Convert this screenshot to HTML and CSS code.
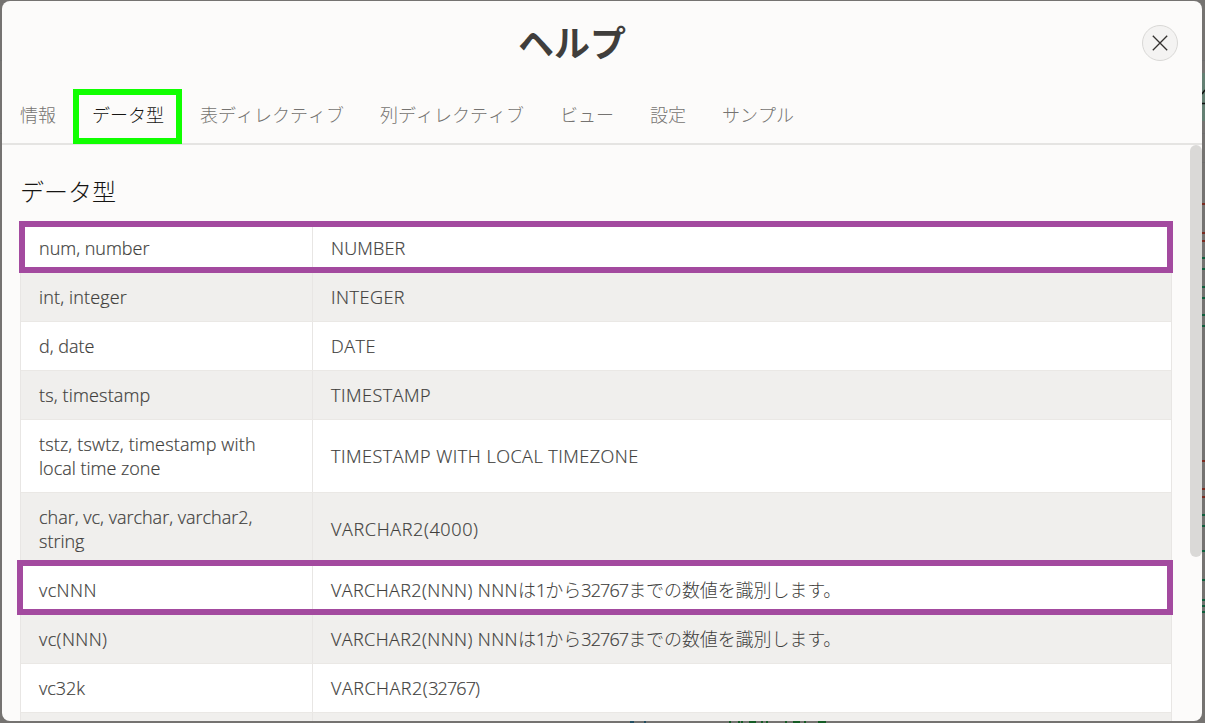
FILE: index.html
```html
<!DOCTYPE html>
<html lang="ja">
<head>
<meta charset="utf-8">
<title>ヘルプ</title>
<link rel="stylesheet" href="styles.css">
</head>
<body>
<div class="backdrop" aria-hidden="true">
  <svg width="1205" height="723" viewBox="0 0 1205 723">
    <path fill="#648073" d="M1202 73h3v48h-3z"/>
    <path stroke="#6e6e6e" d="M1202 60.500h3M1202 133.500h3M0 133.500h2M1202 162.500h3M0 60.500h2"/>
    <path stroke="#111" stroke-width="1.500" d="M1202 94l3-4M1202 103.500h3"/>
    <path stroke="#7a2b20" stroke-width="2" d="M1202 204h3M1202 233h3M1202 241h3M1202 461h3M1202 489h3M1202 497h3"/>
    <path stroke="#105f3c" stroke-width="2" d="M1202 258h3M1202 269h3M1202 287h3M1202 298h3M1202 315h3M1202 326h3M1202 515h3M1202 526h3M1202 551h3M1202 580h3M1202 600h3M1202 606h3M1202 612h3"/>
    <path stroke="#244f62" stroke-width="2" d="M630 722h4M644 722h2"/>
    <path stroke="#155c25" stroke-width="2" d="M729 722h2M738 722h2M741 722h2M749 722h7M761 722h2M766 722h2M785 722h2M793 722h7M804 722h2M818 722h8"/>
  </svg>
</div>
<main class="dialog">
  <header class="dialog-header">
    <h1 class="dialog-title">ヘルプ</h1>
    <button class="close" aria-label="閉じる"><svg width="16" height="16" viewBox="0 0 16 16"><path d="M.8.8l14.400 14.400M15.200.8L.8 15.200"/></svg></button>
  </header>
  <nav class="tabs">
    <span class="tab">情報</span>
    <span class="tab active">データ型</span>
    <span class="tab">表ディレクティブ</span>
    <span class="tab">列ディレクティブ</span>
    <span class="tab">ビュー</span>
    <span class="tab">設定</span>
    <span class="tab">サンプル</span>
  </nav>
  <section class="content">
    <h2 class="section-title">データ型</h2>
    <div class="table">
      <div class="row marked first"><div class="cell">num, number</div><div class="cell loose">NUMBER</div></div>
      <div class="row"><div class="cell loose">int, integer</div><div class="cell caps">INTEGER</div></div>
      <div class="row"><div class="cell">d, date</div><div class="cell caps">DATE</div></div>
      <div class="row"><div class="cell loose">ts, timestamp</div><div class="cell caps">TIMESTAMP</div></div>
      <div class="row"><div class="cell"><span><span class="loose">tstz, tswtz, timestamp with</span><br>local time zone</span></div><div class="cell caps">TIMESTAMP WITH LOCAL TIMEZONE</div></div>
      <div class="row"><div class="cell">char, vc, varchar, varchar2,<br>string</div><div class="cell wide">VARCHAR2(4000)</div></div>
      <div class="row marked second"><div class="cell type">vcNNN</div><div class="cell"><span><span class="type">VARCHAR2(NNN) NNN</span><span class="ja">は</span><span class="digits">1</span><span class="ja">から</span><span class="digits">32767</span><span class="ja tail">までの数値を識別します。</span></span></div></div>
      <div class="row"><div class="cell type">vc(NNN)</div><div class="cell"><span><span class="type">VARCHAR2(NNN) NNN</span><span class="ja">は</span><span class="digits">1</span><span class="ja">から</span><span class="digits">32767</span><span class="ja tail">までの数値を識別します。</span></span></div></div>
      <div class="row"><div class="cell">vc32k</div><div class="cell"><span class="caps">VARCHAR2(</span><span class="digits">32767</span>)</div></div>
      <div class="row"><div class="cell"></div><div class="cell"></div></div>
    </div>
    <div class="scrollbar"></div>
  </section>
</main>
</body>
</html>
```
FILE: styles.css
```css
* { box-sizing: border-box; }
body {
  margin: 0;
  width: 1205px;
  height: 723px;
  padding: 1px 3px 2px 2px;
  overflow: hidden;
  background: #757371;
  color: #403e3c;
  font: 300 18px/24px "Open Sans", "Noto Sans CJK JP", sans-serif;
}
.backdrop { position: absolute; inset: 0; }
.backdrop svg { display: block; }
.dialog {
  position: relative;
  display: flex;
  flex-direction: column;
  height: 720px;
  border-radius: 8px;
  overflow: hidden;
  background: #fcfbfa;
}
.dialog-header {
  display: grid;
  grid-template-columns: 1fr 60px;
  align-items: center;
  height: 84px;
}
.dialog-title {
  margin: 0;
  padding-bottom: 4px;
  font: 700 36px/48px "Noto Sans CJK JP", sans-serif;
  text-align: center;
  color: #403e3c;
}
.close {
  display: grid;
  place-items: center;
  width: 36px;
  height: 36px;
  padding: 0;
  border: 1px solid #d9d8d6;
  border-radius: 50%;
  background: #f4f3f2;
}
.close path { fill: none; stroke: #33312f; stroke-width: 1.300; }
.tabs {
  display: flex;
  height: 60px;
  border-bottom: 2px solid #e5e4e2;
  font: 300 18px/24px "Noto Sans CJK JP", sans-serif;
  font-kerning: none;
  color: #757371;
}
.tab { height: 55px; padding: 17px 18px 0; }
.tab.active {
  margin: 4px 0 0 -1px;
  padding: 13px 18px 0 19px;
  color: #161513;
  outline: 6px solid #10ff00;
  outline-offset: -6px;
}
.content {
  display: flex;
  justify-content: space-between;
  flex-wrap: wrap;
  align-content: flex-start;
  flex: 1;
  padding-left: 18px;
  overflow: hidden;
  position: relative;
}
.section-title {
  width: 100%;
  height: 78px;
  margin: 0;
  padding-top: 30px;
  font: 300 24px/32px "Noto Sans CJK JP", sans-serif;
  color: #161513;
}
.table { width: 1152px; border: 1px solid #e8e6e4; -webkit-text-stroke: .2px #403e3c; }
.row {
  position: relative;
  display: grid;
  grid-template-columns: 292px 1fr;
  border-bottom: 1px solid #eae8e5;
  background: #fff;
}
.row:nth-child(even) { background: #f0efed; }
.cell { display: flex; align-items: center; min-height: 48px; padding: 12px 18px; white-space: nowrap; }
.cell:first-child { border-right: 1px solid #e8e6e4; }
.caps { letter-spacing: .5px; }
.wide { letter-spacing: .64px; }
.loose { letter-spacing: .16px; }
.type { letter-spacing: .4px; }
.digits { letter-spacing: -.9px; }
.ja { font: 300 18px/1 "Noto Sans CJK JP", sans-serif; -webkit-text-stroke: 0; }
.tail { letter-spacing: -.1px; }
.marked::after {
  content: "";
  position: absolute;
  z-index: 1;
  border: 6px solid #a34a9f;
}
.first::after { inset: -3px -2px -1px -2px; }
.second::after { inset: -6px -2px -1px -4px; }
.scrollbar {
  position: absolute;
  top: 0;
  right: 0;
  width: 12px;
  height: 412px;
  border-radius: 6px;
  background: #dad9d7;
}
```
